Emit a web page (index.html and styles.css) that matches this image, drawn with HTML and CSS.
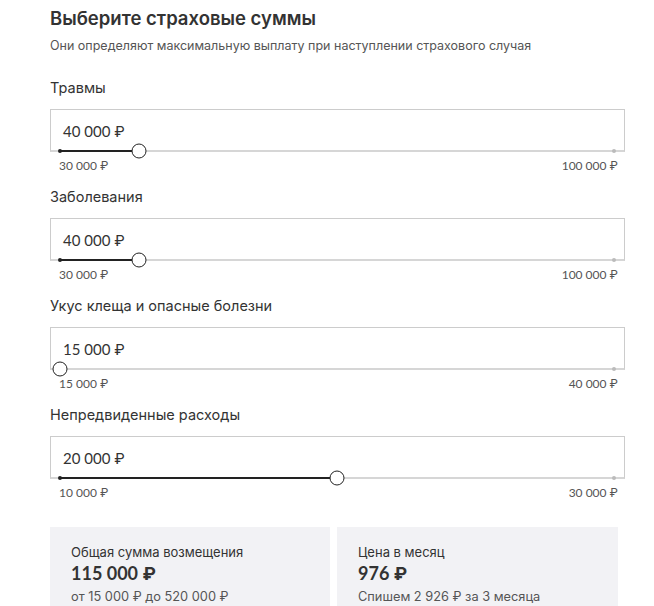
FILE: index.html
```html
<!DOCTYPE html>
<html lang="ru">
<head>
    <meta charset="UTF-8">
    <meta name="viewport" content="width=device-width, initial-scale=1.0">
    <title>Страховые суммы</title>
    <link rel="stylesheet" href="styles.css">
</head>
<body>
<div class="page">
    <h1>Выберите страховые суммы</h1>
    <p class="subtitle">Они определяют максимальную выплату при наступлении страхового случая</p>

    <div class="form-group">
        <div class="label">Травмы</div>
        <div class="field">
            <div class="box"><span class="num">40 000 ₽</span></div>
            <div class="slider">
                <div class="fill" style="width: 14.29%"></div>
                <div class="dot dot-start"></div>
                <div class="dot dot-end"></div>
                <div class="thumb" style="left: 14.29%"></div>
            </div>
            <div class="scale num"><span>30 000 ₽</span><span>100 000 ₽</span></div>
        </div>
    </div>

    <div class="form-group">
        <div class="label">Заболевания</div>
        <div class="field">
            <div class="box"><span class="num">40 000 ₽</span></div>
            <div class="slider">
                <div class="fill" style="width: 14.29%"></div>
                <div class="dot dot-start"></div>
                <div class="dot dot-end"></div>
                <div class="thumb" style="left: 14.29%"></div>
            </div>
            <div class="scale num"><span>30 000 ₽</span><span>100 000 ₽</span></div>
        </div>
    </div>

    <div class="form-group">
        <div class="label">Укус клеща и опасные болезни</div>
        <div class="field">
            <div class="box"><span class="num">15 000 ₽</span></div>
            <div class="slider">
                <div class="fill" style="width: 0%"></div>
                <div class="dot dot-start"></div>
                <div class="dot dot-end"></div>
                <div class="thumb" style="left: 0%"></div>
            </div>
            <div class="scale num"><span>15 000 ₽</span><span>40 000 ₽</span></div>
        </div>
    </div>

    <div class="form-group">
        <div class="label">Непредвиденные расходы</div>
        <div class="field">
            <div class="box"><span class="num">20 000 ₽</span></div>
            <div class="slider">
                <div class="fill" style="width: 50%"></div>
                <div class="dot dot-start"></div>
                <div class="dot dot-end"></div>
                <div class="thumb" style="left: 50%"></div>
            </div>
            <div class="scale num"><span>10 000 ₽</span><span>30 000 ₽</span></div>
        </div>
    </div>

    <div class="summary">
        <div class="card">
            <div class="card-title">Общая сумма возмещения</div>
            <div class="card-value num">115 000 ₽</div>
            <div class="card-note">от 15 000 ₽ до 520 000 ₽</div>
        </div>
        <div class="card">
            <div class="card-title">Цена в месяц</div>
            <div class="card-value num">976 ₽</div>
            <div class="card-note">Спишем 2 926 ₽ за 3 месяца</div>
        </div>
    </div>
</div>
</body>
</html>
```

FILE: styles.css
```css
body {
    margin: 0;
    font-family: 'Inter', 'Roboto', sans-serif;
    color: #333;
    background-color: #fff;
}

.page {
    padding: 6px 0 0 50px;
    width: 575px;
}

h1 {
    margin: 0;
    font-size: 18.5px;
    line-height: 24px;
    font-weight: 600;
    color: #333;
}

.subtitle {
    margin: 7px 0 23px;
    font-size: 12.5px;
    line-height: 18px;
    color: #555;
}

.num {
    font-family: 'Lato', 'Inter', sans-serif;
}

.form-group {
    margin-bottom: 14px;
}

.label {
    font-size: 14.5px;
    line-height: 20px;
    margin-bottom: 11px;
}

.field {
    width: 575px;
}

.box {
    height: 43px;
    box-sizing: border-box;
    border: 1px solid #ccc;
    border-bottom: 2px solid #d6d6d6;
    padding: 11px 0 0 12px;
    font-size: 15px;
    line-height: 20px;
    color: #333;
}

.slider {
    position: relative;
    height: 0;
    margin: -1px 11px 0 10px;
}

.fill {
    position: absolute;
    left: 0;
    top: -1px;
    height: 2px;
    background-color: #222;
}

.dot {
    position: absolute;
    top: -2px;
    width: 4px;
    height: 4px;
    border-radius: 50%;
}

.dot-start {
    left: -2px;
    background-color: #222;
}

.dot-end {
    right: -2px;
    background-color: #bbb;
}

.thumb {
    position: absolute;
    top: 0;
    width: 13px;
    height: 13px;
    border: 1.5px solid #222;
    border-radius: 50%;
    background-color: #fff;
    transform: translate(-50%, -50%);
}

.scale {
    display: flex;
    justify-content: space-between;
    margin: 8px 7px 0 9px;
    font-size: 12px;
    line-height: 14px;
    color: #555;
}

.summary {
    display: grid;
    grid-template-columns: 280px 281px;
    gap: 7px;
    margin-top: 27px;
}

.card {
    background-color: #f2f2f5;
    padding: 16px 21px 10px;
}

.card-title {
    font-size: 13px;
    line-height: 18px;
    color: #333;
}

.card-value {
    font-size: 18px;
    line-height: 24px;
    font-weight: 700;
    color: #333;
}

.card-note {
    font-size: 12.8px;
    line-height: 18px;
    color: #555;
    margin-top: 3px;
}
```
